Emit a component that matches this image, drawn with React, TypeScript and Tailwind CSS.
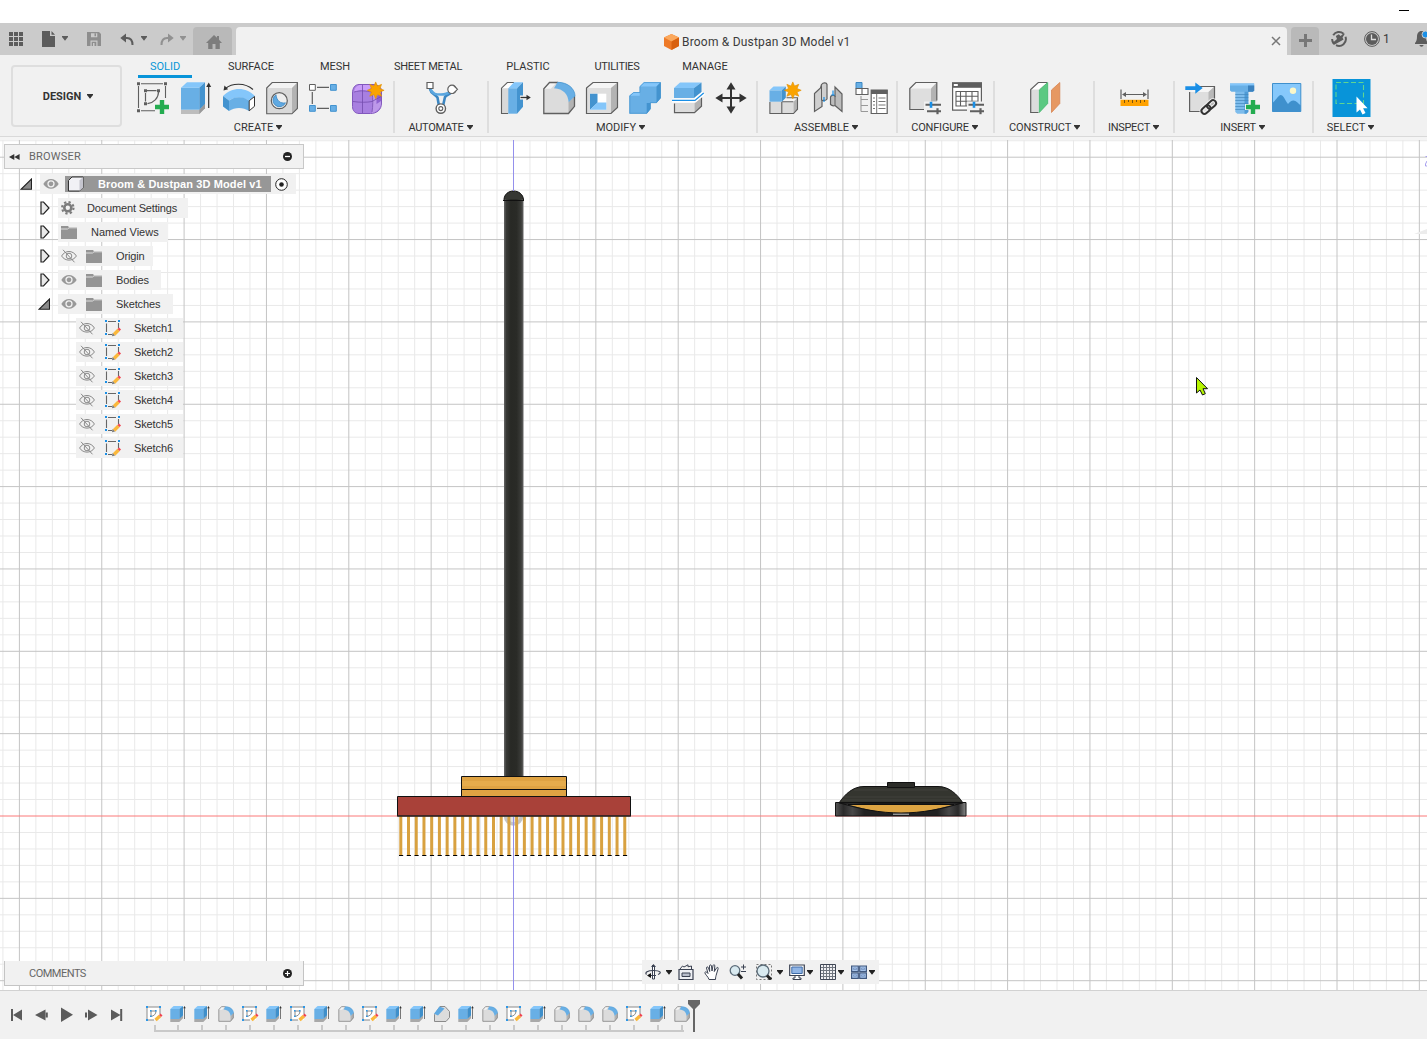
import React from "react";

const INK = "#5f5f5f";

function Caret({ className = "" }: { className?: string }) {
  return (
    <svg width="6" height="5" viewBox="0 0 6 5" className={`shrink-0 ${className}`}>
      <path d="M-.2 0h6.400v.8L3 4.800-.2.8z" fill="currentColor" />
    </svg>
  );
}

/* ---------- ribbon glyphs, each drawn in a 43 x 40 slot ---------- */

function Slot({ children }: { children: React.ReactNode }) {
  return (
    <svg width="43" height="40" viewBox="0 0 43 40" fill="none" className="shrink-0">
      {children}
    </svg>
  );
}

const Plus = ({ x, y }: { x: number; y: number }) => (
  <path d={`M${x - 7} ${y}h14M${x} ${y - 7}v14`} stroke="#24ac50" strokeWidth="4.4" />
);

function Star({ x, y }: { x: number; y: number }) {
  const pts: string[] = [];
  for (let i = 0; i < 16; i++) {
    const r = i % 2 ? 4.6 : 8.4;
    const a = (i * Math.PI) / 8;
    pts.push(`${x + r * Math.sin(a)},${y - r * Math.cos(a)}`);
  }
  return <polygon points={pts.join(" ")} fill="#faa300" stroke="#e08e00" strokeWidth=".6" />;
}

const Sliders = () => (
  <g>
    <path d="M21 23.5h18v13H21z" fill="#f1f1f1" />
    <path d="M22.5 26.8h15.5M24 33.2h14" stroke={INK} strokeWidth="2" />
    <path d="M28 23.8v6" stroke="#1a8fe6" strokeWidth="2.6" />
    <path d="M34.5 30.2v6" stroke={INK} strokeWidth="2.2" />
  </g>
);

const CreateSketch = () => (
  <Slot>
    <path d="M9 5.7h22M6.5 8v22M9 32.7h14M33.5 8v12" stroke={INK} strokeWidth="1.1" />
    <path d="M15 12.7h9.5M13.5 15v8.500M26.5 14c0 6-5 11-11 11.700" stroke={INK} strokeWidth="1.2" />
    <path d="M5 4.200h3v3H5zM32 4.200h3v3h-3zM5 31.200h3v3H5zM12 11.200h3v3h-3zM25 11.200h3v3h-3zM12 24.200h3v3h-3z" fill={INK} />
    <Plus x={30} y={29} />
  </Slot>
);
const Extrude = () => (
  <Slot>
    <path d="M6 31.7h18.3l5.7-5.4v4L24.3 36H6z" fill="#bdbdbd" />
    <path d="M24.3 31.7l5.7-6.4v5L24.3 36z" fill="#9a9a9a" />
    <path d="M6 9.7h18.3v22H6z" fill="#68afe5" />
    <path d="M6 9.7l6-5.4h18l-5.7 5.4z" fill="#84c6fa" />
    <path d="M24.3 9.7L30 4.3v21.4l-5.7 6z" fill="#4393cf" />
    <path d="M33.7 7.5V30" stroke="#333" strokeWidth="1.2" />
    <path d="M31.2 9l2.5-4.5L36.2 9z" fill="#333" />
  </Slot>
);
const Revolve = () => (
  <Slot>
    <path d="M5 18c9-9.5 23-9.5 32 0l-6 4.5c-7-4-14-4-20 0z" fill="#84c6fa" />
    <path d="M5 18l6 4.5V33L5 28.5z" fill="#4393cf" />
    <path d="M11 22.5c6-4.5 14-4.5 20 0V33c-6-4-14-4-20 0z" fill="#68afe5" />
    <path d="M31.2 22.8l5.3-4.3v9.8l-5.3 4.5z" fill="#fff" stroke="#333" />
    <path d="M7.5 10.5C14 5 27 4.5 35 11.5" stroke="#333" strokeWidth="1.1" />
    <path d="M5.5 12.5l1-5 3.6 3.7z" fill="#333" />
  </Slot>
);
const Hole = () => (
  <Slot>
    <path d="M5.7 10l5.5-5.5h25.2v26l-5.5 5.3H5.7z" fill="#d9d9d9" />
    <path d="M5.7 10l5.5-5.5h25.2L31 10z" fill="#f3f3f3" />
    <path d="M31 10l5.4-5.5v26L31 35.8z" fill="#b3b3b3" />
    <path d="M5.7 10l5.5-5.5h25.2v26l-5.5 5.3H5.7z" stroke={INK} strokeWidth="1.1" />
    <circle cx="18.3" cy="22.7" r="8" fill="#eee" stroke={INK} strokeWidth="1.2" />
    <path d="M15 16.8a6.5 6.5 0 1 0 9.5 8C19.5 26 15.5 22.5 15 16.8z" fill="#5fa9e2" stroke="#3b86c2" strokeWidth=".8" />
  </Slot>
);
const Pattern = () => (
  <Slot>
    <path d="M13 9.3h12M13 30.3h12M8.3 14v12" stroke={INK} strokeWidth="1.2" />
    <path d="M5.5 6.5h5.8v5.8H5.5z" fill="#fff" stroke={INK} />
    <path d="M26.5 6.5h5.8v5.8h-5.8zM5.5 27.5h5.8v5.8H5.5zM26.5 27.5h5.8v5.8h-5.8z" fill="#68afe5" stroke="#4393cf" />
  </Slot>
);
const Form = () => (
  <Slot>
    <path d="M12 6.5h14c5 0 8.5 3 8.5 6.500v12c0 7-5 10.500-11 10.500H12c-4 0-6.500-3-6.500-7V15c0-5 2.500-8.500 6.500-8.500z" fill="#a87fe0" stroke="#8258bd" />
    <path d="M7 14c1-5 3-7 7-7h12l-5 6c-5-1-9-1-14 1z" fill="#ca9df9" />
    <path d="M25 16c4-1 6-3 9-3v13c-1 5-5 8-9 9z" fill="#bd98e9" />
    <path d="M29.5 18l4.500-3v8l-4.500 3z" fill="#8f62cf" />
    <path d="M6 23.5c7 1 14 1 19 0l9-5M15.500 7v28M25 14c1 7 1 14 0 20M7 14c7-2 12-1 18 0" stroke="#734bad" strokeWidth=".8" />
    <Star x={28.7} y={12.3} />
  </Slot>
);
const Automate = () => (
  <Slot>
    <path d="M10 11c1 5 5 5 7.5 8.5L19 28h4l2-9c2-3 5-2 6.500-5" stroke="#3b86c2" strokeWidth="2.6" />
    <path d="M10.5 11.5c3 5 5 5 10.500 5s7-1 9-3" stroke="#5aa6df" strokeWidth="2.6" />
    <path d="M7 4.500h6v6H7z" fill="#fff" stroke={INK} strokeWidth="1.2" />
    <circle cx="32" cy="11.300" r="4.200" fill="#fff" stroke={INK} strokeWidth="1.2" />
    <path d="M33 7.200l4.500 4.100-4.500 4.400" fill="#fff" stroke={INK} strokeWidth="1.1" />
    <circle cx="20.800" cy="30.600" r="4.700" fill="#fff" stroke={INK} strokeWidth="1.4" />
    <circle cx="20.800" cy="30.600" r="2" stroke={INK} strokeWidth="1.1" />
  </Slot>
);
const PressPull = () => (
  <Slot>
    <path d="M7.5 10.2l5.8-5.7H21l-6 6v25.2H7.5z" fill="#d9d9d9" />
    <path d="M7.5 10.2l5.8-5.7H21l-6 5.7z" fill="#fff" />
    <path d="M14 35.5H7.5V10.2l5.8-5.7H20" stroke={INK} strokeWidth="1.1" />
    <path d="M14.3 10.2H23v25.500h-8.700z" fill="#68afe5" />
    <path d="M14.3 10.2L20 4.300h9l-6 5.900z" fill="#84c6fa" />
    <path d="M23 10.2l6-5.900v24.500l-6 6.900z" fill="#4393cf" />
    <path d="M26 19.5h12" stroke="#f1f1f1" strokeWidth="4" />
    <path d="M26.5 19.5h7" stroke="#333" strokeWidth="1.3" />
    <path d="M32.5 16.8l4.3 2.7-4.3 2.7z" fill="#333" />
  </Slot>
);

function FilletShape({ outline = INK }: { outline?: string }) {
  return (
    <g>
      <path d="M6.8 10.8L12.5 4.500h8c10 0 17 6 17 14v9.800l-6 7.200H6.800z" fill="#dcdcdc" />
      <path d="M31.5 24l6-6v10.300l-6 7.200z" fill="#b3b3b3" />
      <path d="M6.800 10.800L12.500 4.500h7l-5.700 6.300z" fill="#f4f4f4" />
      <path d="M21 4.500h-8.500l-5.700 6.300v24.700h24.700l6-7.200V18" stroke={outline} strokeWidth="1.3" fill="none" />
      <path d="M20.5 4.300c10 0 17.300 6 17.500 13.700l-6.300 6.300c-.7-8-5-13.300-14.700-14z" fill="#68afe5" />
      <path d="M20.5 4.300c10 0 17.300 6 17.500 13.700l-1.500 1.300" stroke="#4393cf" strokeWidth=".8" fill="none" />
    </g>
  );
}
const Fillet = () => (
  <Slot>
    <FilletShape />
  </Slot>
);
const Shell = () => (
  <Slot>
    <path d="M6.5 10l6.500-5.500h24.500v25L31 35.500H6.500z" fill="#dedede" />
    <path d="M6.5 10L13 4.500h24.500L31 10z" fill="#f5f5f5" />
    <path d="M31 10l6.500-5.500v25L31 35.500z" fill="#b3b3b3" />
    <path d="M6.5 10L13 4.500h24.500v25L31 35.500H6.500z" stroke={INK} strokeWidth="1.2" />
    <path d="M10 15.700h16.300v16H10z" fill="#fff" />
    <path d="M10 15.700h7.500v9L10 31.700z" fill="#4393cf" />
    <path d="M17.5 24.500h8.800v7.200H10z" fill="#84c6fa" />
  </Slot>
);
const Combine = () => (
  <Slot>
    <path d="M6.300 17.700l4.200-3.500h6.200V8.500l4.300-4.200h16.700V20l-4.200 5h-6v6l-3.800 4.700H6.300z" fill="#68afe5" />
    <path d="M6.300 17.700l4.200-3.500h6.200v3.500zM16.700 8.500L21 4.300h16.700l-4.200 4.200z" fill="#84c6fa" />
    <path d="M33.500 8.500l4.200-4.200V20l-4.200 5zM23.700 25h3.800v6l-3.800 4.700z" fill="#4393cf" />
    <path d="M6.800 17.900l3.900-3.400h6.200V8.700l4.200-4.100h16.300V20l-4 4.700h-6v6l-3.700 4.600H6.800z" stroke="#4393cf" strokeWidth=".7" />
  </Slot>
);
const SplitBody = () => (
  <Slot>
    <path d="M8 10h20v10H8z" fill="#68afe5" />
    <path d="M8 10l6-5.500h21.500L28 10z" fill="#84c6fa" />
    <path d="M28 10l7.500-5.500V14L28 20z" fill="#4393cf" />
    <path d="M8.500 25h20v9.700h-20z" fill="#dcdcdc" />
    <path d="M28.500 25l7-6.500v9.700l-7 6.500z" fill="#b3b3b3" />
    <path d="M8.500 25.500v9.200h20l7-6.500v-9" stroke={INK} strokeWidth="1.2" />
    <path d="M6 22.400h23l8.700-7.300" stroke="#fff" strokeWidth="4" />
    <path d="M6 22.400h23l8.700-7.300" stroke="#1a8fe6" strokeWidth="1.3" />
  </Slot>
);
const Move = () => (
  <Slot>
    <path d="M10 20h24M22 8v24" stroke="#333" strokeWidth="2" />
    <path d="M17.500 11.500L22 4.300l4.500 7.200zM17.500 28.500L22 35.700l4.500-7.200zM13.500 15.500L6.300 20l7.200 4.500zM30.500 15.500l7.200 4.500-7.200 4.500z" fill="#333" />
  </Slot>
);
const NewComponent = () => (
  <Slot>
    <path d="M6.500 23.700h24v12h-24z" fill="#dcdcdc" />
    <path d="M18.800 23.700l4.200-4h11.500l-4 4z" fill="#f5f5f5" />
    <path d="M30.500 23.700l4-4v11.500l-4 4.500z" fill="#b3b3b3" />
    <path d="M6.900 24v11.500h23.600l4-4.300V19.800h-11M18.800 24v11.500M18.800 23.700h11.500" stroke={INK} strokeWidth="1.1" />
    <path d="M6.500 12.300h12.300v11.400H6.500z" fill="#68afe5" />
    <path d="M6.500 12.300l4-3.800h12.300l-4 3.800z" fill="#84c6fa" />
    <path d="M18.800 12.300l4-3.800v11.200l-4 4z" fill="#4393cf" />
    <Star x={29.8} y={12.3} />
  </Slot>
);
const Joint = () => (
  <Slot>
    <path d="M8.500 15.500l6-5.500 1-3.500c2-2.500 5-2 5.500 0V21c-1.500 2.500-3.500 1-5 1.500v6l-7.500 5z" fill="#cfcfcf" stroke={INK} strokeWidth="1.2" />
    <path d="M15.500 7.500v15" stroke={INK} />
    <path d="M36 16l-7-7v9c-2-1.500-4-.5-4.500 1v7.500c1.500 1.500 3 1.500 4.500 1l7 6z" fill="#bdbdbd" stroke={INK} strokeWidth="1.2" />
    <path d="M29 18v9" stroke={INK} />
    <path d="M18 19v5M27 12.500v5M25.300 17h3.400" stroke="#1a8fe6" strokeWidth="1.2" />
  </Slot>
);
const BillOfMaterials = () => (
  <Slot>
    <path d="M7 4.500h6v6H7z" fill="#68afe5" stroke="#3b86c2" />
    <path d="M7 10.500h6v6H7zM13 10.500h6v6h-6z" fill="#fff" stroke={INK} strokeWidth="1.1" />
    <path d="M12 18v15.500M12 21.500h7M12 27.500h7M12 33.500h7" stroke="#999" strokeWidth="1.1" />
    <path d="M22.200 12.200h16v23.300h-16z" fill="#fff" stroke={INK} strokeWidth="1.2" />
    <path d="M22 12h16.500v4H22z" fill={INK} />
    <path d="M27.700 16v19M29.500 20h7M29.500 23.500h7M29.500 27h7M29.500 30.500h7M24 20h2M24 23.500h2M24 27h2M24 30.500h2" stroke="#777" />
  </Slot>
);
const Configure = () => (
  <Slot>
    <path d="M6.800 10.500l6-6h21v21L28 31.500H6.800z" fill="#dedede" />
    <path d="M6.800 10.500l6-6h21L28 10.500z" fill="#f5f5f5" />
    <path d="M28 10.500l5.800-6v21L28 31.500z" fill="#b3b3b3" />
    <path d="M22 31.500H6.800v-21l6-6h21v18" stroke={INK} strokeWidth="1.2" />
    <Sliders />
  </Slot>
);
const ConfigTable = () => (
  <Slot>
    <path d="M6.600 5h28.800v27.200H6.600z" fill="#fff" stroke={INK} strokeWidth="1.2" />
    <path d="M6 4.300h30v5.500H6z" fill={INK} />
    <path d="M7.800 6h4v2h-4z" fill="#fff" />
    <path d="M10 13.500h22v14.500H10zM10 18.300h22M10 23.200h22M14.500 13.500V28M20 13.500V28M26 13.500V28" stroke={INK} strokeWidth="1.1" />
    <Sliders />
  </Slot>
);
const Construct = () => (
  <Slot>
    <path d="M7.700 11.500l7.600-7h9l-8.800 8v22H7.700z" fill="#dcdcdc" />
    <path d="M7.700 11.500l7.600-7h9l-8.800 7z" fill="#fff" />
    <path d="M15.500 34.500H7.700v-23l7.600-7H24" stroke={INK} strokeWidth="1.2" />
    <path d="M16.300 12l8.400-7.500v21l-8.400 9z" fill="#5bc982" stroke="#3fb56a" strokeWidth=".8" />
    <path d="M28.500 12l8.300-7.500v21l-8.300 9z" fill="#e69862" stroke="#d88450" strokeWidth=".8" />
  </Slot>
);
const Inspect = () => (
  <Slot>
    <path d="M8 11.500v9.500M35 11.500v9.500M10 16.500h23" stroke={INK} strokeWidth="1.2" />
    <path d="M9 16.500l4-2.500v5zM34 16.500l-4-2.500v5z" fill={INK} />
    <path d="M7.500 21.800h28V28h-28z" fill="#ffa200" />
    <path d="M11.500 22v3M15.500 22v2M19.500 22v3M23.500 22v2M27.500 22v3M31.500 22v2" stroke="#7a5410" />
  </Slot>
);
const InsertLink = () => (
  <Slot>
    <path d="M9.600 14l6-5.500h19V28l-6 5.500h-19z" fill="#dedede" />
    <path d="M9.600 14l6-5.500h19l-6 5.500z" fill="#f5f5f5" />
    <path d="M28.500 14l6-5.500V28l-6 5.500z" fill="#b8b8b8" />
    <path d="M20 33.500H9.600V14M20 8.500h14.500v14" stroke={INK} strokeWidth="1.2" />
    <path d="M5.300 8.300h10V4.500l7.400 5.500-7.400 5.800V12h-10z" fill="#1a8fe6" />
    <g transform="rotate(-42 28.800 29)" stroke="#f1f1f1" strokeWidth="4">
      <rect x="20" y="26" width="10" height="6" rx="3" />
      <rect x="27.500" y="26" width="10" height="6" rx="3" />
    </g>
    <g transform="rotate(-42 28.800 29)" stroke="#333" strokeWidth="2">
      <rect x="20" y="26" width="10" height="6" rx="3" />
      <rect x="27.500" y="26" width="10" height="6" rx="3" />
    </g>
  </Slot>
);
const Fastener = () => (
  <Slot>
    <path d="M12.300 13h13v21l-2 1.700h-9l-2-1.700z" fill="#7dbcec" />
    <path d="M21.500 13h3.800v21l-2 1.700h-1.800z" fill="#4f9bd6" />
    <path d="M12.300 16.500h13M12.300 19.500h13M12.300 22.500h13M12.300 25.500h13M12.300 28.500h13M12.300 31.500h13" stroke="#4488bd" strokeWidth=".7" />
    <path d="M7 5.500h24.200v7L30 13.800H8.500L7 12.500z" fill="#68afe5" />
    <path d="M7 5.500h24v2H7z" fill="#84c6fa" />
    <path d="M25 7.500h6.200v5L30 13.800h-5z" fill="#3b82bf" />
    <path d="M22 29h16M30 21v16" stroke="#f1f1f1" strokeWidth="6" />
    <Plus x={30} y={29} />
  </Slot>
);
const InsertImage = () => (
  <Slot>
    <path d="M6.500 5.500h28.300v28H6.500z" fill="#86c8fb" />
    <path d="M6.500 25c3-2 5-7 8-8 3 0 4.500 5 7.500 9 2-2 3-3.500 5.500-3.500s5 3 7.300 5v6H6.500z" fill="#3f90cd" />
    <path d="M6.500 5.500h28.300v28H6.500z" stroke="#3f90cd" />
    <circle cx="27" cy="12.700" r="3.200" fill="#fbf7c9" />
  </Slot>
);
const Select = () => (
  <Slot>
    <path d="M2.500 1h38v38h-38z" fill="#0894d9" />
    <path d="M6 4.500h27.500v21H6z" stroke="#5fd591" strokeWidth="1.1" strokeDasharray="5 2.5" />
    <path d="M26.500 18.500v16l3.500-3 2.500 5 3-1.500-2.400-4.800h4.500z" fill="#fff" />
  </Slot>
);

/* ---------- browser, timeline and navigation glyphs ---------- */

const Eye = () => (
  <svg width="16" height="12" viewBox="0 0 16 12" fill="none" className="shrink-0">
    <path d="M.3 6C4-.8 12-.8 15.700 6 12 12.300 4 12.300.3 6z" fill="#999" />
    <circle cx="8" cy="5.800" r="3" fill="#999" stroke="#f1f1f1" strokeWidth="1.3" />
  </svg>
);
const EyeOff = () => (
  <svg width="16" height="14" viewBox="0 0 16 14" fill="none" className="shrink-0" stroke="#8a8a8a">
    <path d="M.6 7C4 1 12 1 15.400 7 12 12.500 4 12.500.6 7z" />
    <circle cx="8" cy="7" r="2.800" />
    <path d="M2 .8l11.500 12.500" />
  </svg>
);
const Folder = () => (
  <svg width="16" height="13" viewBox="0 0 16 13" className="shrink-0">
    <path d="M0 0h7l1 1.200h8V13H0z" fill="#949494" />
    <path d="M0 3h6.500L8 1.800h8" stroke="#e6e6e6" strokeWidth=".9" fill="none" />
  </svg>
);
const Gear = () => (
  <svg width="14" height="14" viewBox="0 0 14 14" fill="none" className="shrink-0">
    <circle cx="6.800" cy="6.800" r="5.700" stroke="#7b7b7b" strokeWidth="2.200" strokeDasharray="2.240 2.240" />
    <circle cx="6.800" cy="6.800" r="3.500" stroke="#7b7b7b" strokeWidth="2.600" />
  </svg>
);
const SketchGlyph = () => (
  <svg width="18" height="18" viewBox="1 0 18 18" fill="none" className="shrink-0">
    <path d="M5 2.500h8M3.500 4.500V13M15.500 4v5M5 15.500h4" stroke="#666" strokeWidth="1.1" />
    <path d="M2 1h2v2H2zM15 1h2v2h-2zM2 14h2v2H2z" fill="#1a8fe6" />
    <path d="M11 15.500l4.500-4.500" stroke="#fbb83c" strokeWidth="3.400" />
    <path d="M16 8.500l2 2-1.500 1.500-2-2z" fill="#f0424f" />
    <path d="M9.500 14l2.500 2.500-3 .7z" fill="#777" />
  </svg>
);
const Closed = () => (
  <svg width="10" height="14" viewBox="0 0 10 14" className="ml-px shrink-0">
    <path d="M1 1h2.500L9 7l-5.500 6H1z" fill="#e9e9e9" stroke="#222" strokeWidth="1.2" />
  </svg>
);
const Opened = () => (
  <svg width="12" height="12" viewBox="0 0 12 12" className="shrink-0">
    <path d="M11.500 1v10.300H1z" fill="#8b8b8b" stroke="#222" strokeWidth="1.1" />
  </svg>
);

const TimeSketch = () => (
  <svg width="18" height="18" viewBox="0 0 18 18" fill="none">
    <path d="M2 2h13v13H2z" fill="#fff" />
    <path d="M3 2h11M2 3v11M15 3v6M3 15h6M5.500 6h5M6 6v5M11 6c0 3-2 5-5 5.500" stroke="#8a8a8a" />
    <path d="M1 1h2v2H1zM14 1h2v2h-2zM1 14h2v2H1zM5 5h1.600v1.600H5zM10 5h1.600v1.600H10zM5 10.500h1.600v1.600H5z" fill="#2d97e6" />
    <path d="M10.500 15l4.500-4" stroke="#fbb83c" strokeWidth="3.400" />
    <path d="M15.500 8.500l2 2-1.500 1.500-2-2z" fill="#f0424f" />
  </svg>
);
const TimeExtrude = () => (
  <svg width="18" height="18" viewBox="0 0 18 18" fill="none">
    <path d="M1.300 14H10l4-3.500v2.800L10.300 17h-9z" fill="#a9a9a9" />
    <path d="M1.300 4h9v10h-9z" fill="#68afe5" />
    <path d="M1.300 4l3.300-3H14l-3.700 3z" fill="#84c6fa" />
    <path d="M10.300 4L14 1v9.500L10.300 14z" fill="#3f8fca" />
    <path d="M15.500 3v11" stroke="#777" />
    <path d="M14.200 3.300l1.300-2.200 1.300 2.200z" fill="#333" />
  </svg>
);
const TimeFillet = () => (
  <svg width="18" height="18" viewBox="3 1 38 38" fill="none">
    <FilletShape outline="#666" />
  </svg>
);
const TimeChamfer = () => (
  <svg width="18" height="18" viewBox="0 0 18 18" fill="none">
    <path d="M1.500 9.500v7h11.500l3.500-4V6.500L12 1.500H7z" fill="#dcdcdc" stroke="#8a8a8a" />
    <path d="M1 8.800L6.500 1.500 11.500 3.500 5 10.500z" fill="#5fa9e2" />
  </svg>
);

/* ---------- window sections ---------- */

function TitleTabs() {
  return (
    <div className="flex h-8 items-end bg-[#cbcbcb] text-[#5c5c5c]">
      <div className="flex h-full w-[193px] items-center pl-[9px]">
        <svg width="14" height="14" viewBox="0 0 14 14" fill="currentColor">
          <path d="M0 0h4v4H0zM5 0h4v4H5zM10 0h4v4h-4zM0 5h4v4H0zM5 5h4v4H5zM10 5h4v4h-4zM0 10h4v4H0zM5 10h4v4H5zM10 10h4v4h-4z" />
        </svg>
        <svg width="13" height="16" viewBox="0 0 13 16" fill="currentColor" className="ml-[19px]">
          <path d="M0 0h8v5h5v11H0zM9.500 0L13 3.700H9.500z" />
        </svg>
        <Caret className="mb-px ml-[7px]" />
        <svg width="14" height="14" viewBox="0 0 14 14" className="ml-[19px] text-[#8e8e8e]">
          <path d="M0 0h12l2 2v12H0z" fill="currentColor" />
          <path d="M4 1.200h6.300v4H4zM3.500 8.500h7V14h-7z" fill="#cbcbcb" />
          <path d="M7.500 1.200H9v3H7.500zM4.700 9.800h4.600V14H4.700z" fill="currentColor" />
          <path d="M6 11h1.500v3H6z" fill="#cbcbcb" />
        </svg>
        <svg width="14" height="13" viewBox="0 0 14 13" fill="none" className="ml-[19px]">
          <path d="M2 5h5c3.500 0 5.500 2.500 5.500 7" stroke="currentColor" strokeWidth="2" />
          <path d="M6 .5v9L.3 5z" fill="currentColor" />
        </svg>
        <Caret className="mb-px ml-[7px]" />
        <svg width="14" height="13" viewBox="0 0 14 13" fill="none" className="ml-[13px] text-[#919191]">
          <path d="M12 5H7C3.500 5 1.500 7.500 1.500 12" stroke="currentColor" strokeWidth="2" />
          <path d="M8 .5v9L13.700 5z" fill="currentColor" />
        </svg>
        <Caret className="mb-px ml-[6px] text-[#919191]" />
      </div>
      <div className="flex h-7 w-[39px] items-center justify-center rounded-t bg-[#b9b9b9] pt-[2px] pl-[3px]">
        <svg width="16" height="14" viewBox="0 0 16 14" fill="#7d7d7d">
          <path d="M8 0l3 2.800V1h2v3.800L16 8h-2.200v6H9.500V9h-3v5H2.200V8H0z" />
        </svg>
      </div>
      <div className="ml-1 flex h-7 w-[1051px] items-center rounded-t bg-[#f1f1f1] pt-px pr-[6px] pl-[428px]">
        <svg width="15" height="16" viewBox="0 0 15 16">
          <path d="M7.500 0L15 3.500v8.500l-7.500 4L0 12V3.500z" fill="#ee7a28" />
          <path d="M7.500 0L15 3.500 7.500 7.500 0 3.500z" fill="#fba85c" />
          <path d="M7.500 7.500L15 3.500v8.500l-7.500 4z" fill="#d8600f" />
        </svg>
        <span className="ml-[3px] pt-px font-['Roboto'] text-[12px] tracking-[0.2px] whitespace-nowrap text-[#3c3c3c]">Broom &amp; Dustpan 3D Model v1</span>
        <svg width="10" height="10" viewBox="0 0 10 10" className="mb-[2px] ml-auto">
          <path d="M1 1l8 8M9 1L1 9" stroke="#777" strokeWidth="1.5" />
        </svg>
      </div>
      <div className="ml-1 flex h-7 w-7 items-center justify-center rounded-t bg-[#b9b9b9] pb-[2px]">
        <svg width="13" height="13" viewBox="0 0 13 13">
          <path d="M0 6.500h13M6.500 0v13" stroke="#777" strokeWidth="3" />
        </svg>
      </div>
      <div className="flex h-full flex-1 items-center overflow-hidden pl-3">
        <svg width="16" height="16" viewBox="0 0 16 16" fill="none" className="shrink-0">
          <path d="M2.200 4.200A6.900 6.900 0 0 1 12.500 2.700M14.500 5.800A6.900 6.900 0 0 1 5 14.200M2.800 12.500A6.900 6.900 0 0 1 1.100 8" stroke="currentColor" strokeWidth="2" />
          <path d="M2.800 14L1.500 12 6 8 4.800 5l3-1.700L9.500 5 13 2.300l.7.700-2.200 3.500 1 2-2.500 1.500z" fill="currentColor" />
        </svg>
        <svg width="16" height="16" viewBox="0 0 16 16" fill="none" className="ml-[17px] shrink-0">
          <circle cx="8" cy="8" r="7.400" stroke="currentColor" />
          <circle cx="8" cy="8" r="6" fill="currentColor" />
          <path d="M7.500 3.500v5H12" stroke="#ddd" strokeWidth="1.3" />
        </svg>
        <span className="ml-[3px] w-[7px] font-['Roboto'] text-[12px] text-[#3a3a3a]">1</span>
        <svg width="14" height="16" viewBox="0 0 14 16" className="ml-[25px] shrink-0">
          <path d="M6.500 0c3 0 4.500 2.500 4.500 5.500 0 3 .5 5 2 6.500v1H0v-1c1.500-1.500 2-3.500 2-6.500C2 2.500 3.500 0 6.500 0zM4.500 14h4c0 2.200-4 2.200-4 0z" fill="currentColor" />
          <circle cx="10.500" cy="3.500" r="3.500" fill="#1a8fe6" stroke="#cbcbcb" />
        </svg>
      </div>
    </div>
  );
}

const TABS = [
  { t: "SOLID", c: "w-[54px] text-[#0696d7]", on: true },
  { t: "SURFACE", c: "w-[118px]" },
  { t: "MESH", c: "w-[50px]" },
  { t: "SHEET METAL", c: "w-[136px] tracking-[-0.28px]" },
  { t: "PLASTIC", c: "w-[64px]" },
  { t: "UTILITIES", c: "w-[114px] tracking-[-0.3px]" },
  { t: "MANAGE", c: "w-[62px]" },
];

const GROUPS: { t: string; c: string; l: string; icons: (() => React.ReactElement)[] }[] = [
  { t: "CREATE", c: "w-[272px] pl-[6px]", l: "pr-[6px]", icons: [CreateSketch, Extrude, Revolve, Hole, Pattern, Form] },
  { t: "AUTOMATE", c: "w-[94px]", l: "pr-px tracking-[-0.25px]", icons: [Automate] },
  { t: "MODIFY", c: "w-[269px]", l: "pr-[4px]", icons: [PressPull, Fillet, Shell, Combine, SplitBody, Move] },
  { t: "ASSEMBLE", c: "w-[140px]", l: "pr-[2px]", icons: [NewComponent, Joint, BillOfMaterials] },
  { t: "CONFIGURE", c: "w-[97px]", l: "pr-[2px] tracking-[-0.2px]", icons: [Configure, ConfigTable] },
  { t: "CONSTRUCT", c: "w-[100px]", l: "pl-px tracking-[-0.1px]", icons: [Construct] },
  { t: "INSPECT", c: "w-[80px]", l: "pr-px tracking-[-0.3px]", icons: [Inspect] },
  { t: "INSERT", c: "w-[139px] pl-[2px]", l: "pr-[4px] tracking-[-0.15px]", icons: [InsertLink, Fastener, InsertImage] },
  { t: "SELECT", c: "w-[76px]", l: "pr-px", icons: [Select] },
];

function Ribbon() {
  return (
    <div className="flex h-[85px] border-b-[3px] border-[#f4f4f4] bg-[#f1f1f1] font-['Roboto'] text-[11px] text-[#333]">
      <div className="w-[122px] shrink-0 border-b border-[#d9d9d9] pt-[10px] pl-[11px]">
        <div className="flex h-[62px] w-[111px] items-center justify-center gap-[6px] rounded border-2 border-[#dedede] pt-[2px] pl-[3px] font-bold tracking-[-0.02px]">
          DESIGN <Caret className="mb-[2px]" />
        </div>
      </div>
      <div className="flex-1 border-b border-[#d9d9d9]">
        <div className="flex h-[23px] pl-4">
          {TABS.map((t) => (
            <div key={t.t} className={`flex justify-center leading-6 whitespace-nowrap ${t.c} ${t.on ? "border-b-[3px] border-[#0894d9]" : ""}`}>
              {t.t}
            </div>
          ))}
        </div>
        <div className="flex">
          {GROUPS.map((g, i) => (
            <div key={g.t} className="flex">
              <div className={`${g.c} h-[58px] ${i ? "-ml-px" : ""}`}>
                <div className="flex justify-center">
                  {g.icons.map((Icon, k) => (
                    <Icon key={k} />
                  ))}
                </div>
                <div className={`flex items-center justify-center gap-[3px] pt-px leading-[18px] whitespace-nowrap ${g.l}`}>
                  {g.t}
                  <Caret className="mb-[2px]" />
                </div>
              </div>
              {i < GROUPS.length - 1 && <div className="mt-[3px] -ml-px h-[52px] w-[2px] bg-[#dedede]" />}
            </div>
          ))}
        </div>
      </div>
    </div>
  );
}

/* Model space: construction grid, axes and the two modelled objects. */
function Scene() {
  const step = 16.47;
  const cols: number[] = [];
  const rows: number[] = [];
  for (let i = -31; i < 56; i++) cols.push(i);
  for (let i = -41; i < 11; i++) rows.push(i);
  const bristles = Array.from({ length: 30 }, (_, i) => 400.8 + i * 7.723);
  return (
    <svg width="1427" height="850" viewBox="0 140 1427 850" fill="none" className="absolute inset-0">
      <defs>
        <linearGradient id="pole">
          <stop offset="0" stopColor="#666" />
          <stop offset=".12" stopColor="#383936" />
          <stop offset=".35" stopColor="#282925" />
          <stop offset=".65" stopColor="#2a2b27" />
          <stop offset=".88" stopColor="#3b3c39" />
          <stop offset="1" stopColor="#666" />
        </linearGradient>
        <linearGradient id="pan">
          <stop offset="0" stopColor="#555" />
          <stop offset=".06" stopColor="#2a2a2a" />
          <stop offset=".13" stopColor="#484848" />
          <stop offset=".22" stopColor="#222" />
          <stop offset=".78" stopColor="#222" />
          <stop offset=".87" stopColor="#484848" />
          <stop offset=".94" stopColor="#2a2a2a" />
          <stop offset="1" stopColor="#888" />
        </linearGradient>
      </defs>
      <path d="M0 140h1427v850H0z" fill="#fff" />
      <g stroke="#e9e9e9">
        {cols.filter((i) => i % 5).map((i) => <path key={i} d={`M${513.5 + i * step} 140v850`} />)}
        {rows.filter((i) => i % 5).map((i) => <path key={i} d={`M0 ${816 + i * step}h1427`} />)}
      </g>
      <g stroke="#c4c4c4">
        {cols.filter((i) => i % 5 === 0 && i).map((i) => <path key={i} d={`M${513.5 + i * step} 140v850`} />)}
        {rows.filter((i) => i % 5 === 0 && i).map((i) => <path key={i} d={`M0 ${816 + i * step}h1427`} />)}
      </g>
      <path d="M0 816h1427" stroke="#fb7878" />
      <circle cx="513.500" cy="816" r="8" stroke="#c4c4c4" strokeWidth="3.5" fill="#e2e2e2" />
      <path d="M504 200c0-12 19-12 19.500 0z" fill="#363733" />
      <path d="M504 199h19.500v578H504z" fill="url(#pole)" />
      <path d="M503 200.500h21M504 200c0-12 19-12 19.500 0" stroke="#111" />
      <g>
        {bristles.map((x) => (
          <path key={x} d={`M${x} 816v39`} stroke="#d8a140" strokeWidth="3" />
        ))}
        {bristles.map((x) => (
          <path key={x} d={`M${x - 1.8} 855.500h4.200`} stroke="#000" />
        ))}
      </g>
      <path d="M513.500 140v51M513.500 817v173" stroke="#9490ec" />
      <path d="M461.500 777h105v20h-105z" fill="#dfa343" />
      <path d="M462 781h104v5H462z" fill="#e6ac4c" />
      <path d="M461.500 776.500h105v20h-105zM461.500 789.500h105" stroke="#111" />
      <path d="M397.500 796.500h233v19.500h-233z" fill="#a94139" stroke="#111" />
      <path d="M397 816h234" stroke="#222" />
      <g>
        <path d="M835.500 802.500h130.500v13.500h-130.500z" fill="url(#pan)" stroke="#151515" />
        <path d="M839 803c6-9 14-16.500 25-16.500h74c11 0 19 7.500 25 16.500z" fill="#34352f" stroke="#111" />
        <path d="M845 797h112M842 800h118M854 790h94" stroke="#44453f" strokeWidth=".8" />
        <path d="M838 802.500h127M887.500 782.500h27v5h-27z" stroke="#111" fill="#2b2c28" />
        <path d="M848 804.500h106c-18 5-34 8.500-53 8.500s-35-3.500-53-8.500z" fill="#dda442" />
        <path d="M840 803c20 6 40 10 61 10s41-4 61-10M848 804.500h106" stroke="#111" />
        <path d="M893 814.200h16" stroke="#ddd" strokeWidth=".9" />
      </g>
      <path d="M1427 229l-13 5h13z" fill="#ececec" />
      <path d="M1425.500 156.500h1.500M1427 161l-1.500 3v2h1.500" stroke="#a9a1ef" />
      <path d="M1196.500 377.500v15.500l3.500-3 2.500 5 2.800-1.300-2.300-5h4.500z" fill="#b6f500" stroke="#111" />
    </svg>
  );
}

type Row = { t: string; indent: string; w: string; icons: (() => React.ReactElement)[]; state?: "open" | "closed"; tx: string };
const ROWS: Row[] = [
  { t: "Document Settings", indent: "pl-[39px]", w: "w-[130px] pl-[3px]", icons: [Gear], state: "closed", tx: "ml-[12px] tracking-[-0.17px]" },
  { t: "Named Views", indent: "pl-[39px]", w: "w-[110px] pl-[3px]", icons: [Folder], state: "closed", tx: "ml-[14px]" },
  { t: "Origin", indent: "pl-[39px]", w: "w-[95px] pl-[3px]", icons: [EyeOff, Folder], state: "closed", tx: "ml-[14px] tracking-[-0.15px]" },
  { t: "Bodies", indent: "pl-[39px]", w: "w-[103px] pl-[3px]", icons: [Eye, Folder], state: "closed", tx: "ml-[14px] tracking-[-0.15px]" },
  { t: "Sketches", indent: "pl-[38px]", w: "w-[115px] pl-[3px]", icons: [Eye, Folder], state: "open", tx: "ml-[14px] tracking-[-0.1px]" },
  ...[1, 2, 3, 4, 5, 6].map((n) => ({ t: `Sketch${n}`, indent: "pl-[76px]", w: "w-[107px] pl-[3px]", icons: [EyeOff, SketchGlyph], tx: "ml-[12px] tracking-[-0.12px]" })),
];

function Browser() {
  return (
    <div className="relative w-[304px] pt-1 font-['Liberation_Sans'] text-[11px] text-[#333]">
      <div className="ml-1 flex h-[25px] w-[300px] items-center border border-[#c8c8c8] bg-[#f1f1f1] pr-[11px] pl-1">
        <svg width="11" height="6" viewBox="0 0 11 6">
          <path d="M5.300 0v6L0 3zM10.600 0v6L5.300 3z" fill="#333" />
        </svg>
        <span className="ml-[9px] pt-[2px] font-['Roboto'] tracking-[0.2px] text-[#666]">BROWSER</span>
        <svg width="9" height="9" viewBox="0 0 9 9" className="ml-auto">
          <circle cx="4.500" cy="4.500" r="4.500" fill="#222" />
          <path d="M2 4.500h5" stroke="#fff" strokeWidth="1.3" />
        </svg>
      </div>
      <div className="mt-[3px] flex h-6 items-center pl-5">
        <Opened />
        <div className="ml-2 flex h-5 w-[256px] items-center bg-[#f1f1f1] pl-[3px]">
          <Eye />
          <div className="ml-[6px] flex h-4 w-[206px] items-center bg-[#979797] pl-px font-bold whitespace-nowrap text-white">
            <svg width="18" height="16" viewBox="0 0 18 16">
              <path d="M2.500 4.500L6 1h11v10.500L13.500 15h-11z" fill="#f1f1f5" stroke="#333" />
              <path d="M13.500 4.500L17 1v10.500L13.500 15z" fill="#c5c5ce" />
            </svg>
            <span className="ml-[14px] tracking-[0.11px]">Broom &amp; Dustpan 3D Model v1</span>
          </div>
          <svg width="13" height="13" viewBox="0 0 13 13" className="ml-1">
            <circle cx="6.500" cy="6.500" r="5.800" fill="#fff" stroke="#222" />
            <circle cx="6.500" cy="6.500" r="2.300" fill="#222" />
          </svg>
        </div>
      </div>
      {ROWS.map((r) => (
        <div key={r.t} className={`flex h-6 items-center ${r.indent}`}>
          {r.state === "closed" && <div className="w-[19px]"><Closed /></div>}
          {r.state === "open" && <div className="w-5"><Opened /></div>}
          <div className={`flex h-5 items-center bg-[#f1f1f1] whitespace-nowrap ${r.w}`}>
            <div className="flex items-center gap-[9px]">
              {r.icons.map((I, k) => <I key={k} />)}
            </div>
            <span className={r.tx}>{r.t}</span>
          </div>
        </div>
      ))}
    </div>
  );
}

function Comments() {
  return (
    <div className="absolute bottom-1 left-1 flex h-[25px] w-[300px] items-center border-x border-b border-[#c4c4c4] bg-[#f1f1f1] pr-[11px] pl-6 font-['Roboto'] text-[11px] text-[#666]">
      <span className="pt-[2px] tracking-[-0.5px]">COMMENTS</span>
      <svg width="9" height="9" viewBox="0 0 9 9" className="ml-auto">
        <circle cx="4.500" cy="4.500" r="4.500" fill="#222" />
        <path d="M2 4.500h5M4.500 2v5" stroke="#fff" strokeWidth="1.2" />
      </svg>
    </div>
  );
}

function NavBar() {
  const s = "#3b4252";
  return (
    <div className="absolute bottom-[6px] left-[642px] flex h-6 w-[237px] items-center bg-[#f1f1f1] pl-[3px] text-[#222]">
      <svg width="16" height="16" viewBox="0 0 16 16" fill="none">
        <path d="M7.500 1v14h2V3" stroke={s} fill="#fff" />
        <path d="M6 3l2.500-3L11 3z" fill={s} />
        <path d="M13 10.500c4-1.500 2.500-4-4.500-4-6 0-9 2-7 4M4 11.500h7" stroke={s} strokeWidth="1.2" />
        <path d="M2 11.500l4-2.500v5z" fill="#111" />
      </svg>
      <Caret className="ml-[5px]" />
      <svg width="16" height="16" viewBox="0 0 16 16" fill="none" className="ml-[6px]">
        <path d="M1 5.500h14v10H1z" fill="#eef0f4" stroke={s} strokeWidth="1.2" />
        <path d="M4 9h8v3.500H4z" fill="#b9bfcc" stroke={s} />
        <path d="M2 5l2.500-3 1.500 1L10 .8v2L13.500 2v3" stroke={s} />
      </svg>
      <svg width="16" height="16" viewBox="0 0 16 16" fill="#fff" stroke={s} className="ml-[10px]">
        <path d="M5 15.500C4.500 13 1 10.500.8 8.500c.7-1.200 2-.5 3.200 1L2.500 4c0-1.500 1.500-1.500 2 0L5.700 7.500 5.500 2c.2-1.500 1.800-1.500 2 0L8 7l1-5.500c.5-1.300 2-.8 1.800.5l-.5 5.500L12.500 4c.7-1.300 2-.6 1.600.8L12.500 10c-.5 2-1 3-1 5.500z" />
      </svg>
      <svg width="18" height="16" viewBox="0 0 18 16" fill="none" className="ml-[9px]">
        <circle cx="6" cy="6.500" r="4.800" fill="#d9eaf0" stroke="#5b6b78" strokeWidth="1.3" />
        <path d="M9 10l4 4.500" stroke="#222" strokeWidth="3" />
        <path d="M12 3h5M14.500.5v5M12 7.500h5" stroke={s} />
      </svg>
      <svg width="17" height="16" viewBox="0 0 17 16" fill="none" className="ml-[9px]">
        <path d="M.5.5h15v15H.5z" stroke="#777" strokeDasharray="2 2" />
        <circle cx="7" cy="7" r="6" fill="#d9eaf0" stroke="#5b6b78" strokeWidth="1.3" />
        <path d="M11 11.500l4 4" stroke="#222" strokeWidth="3" />
      </svg>
      <Caret className="ml-[4px]" />
      <svg width="16" height="16" viewBox="0 0 16 16" fill="none" className="ml-[6px]">
        <path d="M.7 1h14.600v10.500H.7z" fill="#fff" stroke={s} strokeWidth="1.2" />
        <path d="M2.800 3h10.400v6.500H2.800z" fill="#90b5e6" stroke="#3e6ba8" />
        <path d="M6 12v2H4v1.500h8V14h-2v-2" stroke={s} fill="#fff" />
      </svg>
      <Caret className="ml-[2px]" />
      <svg width="16" height="16" viewBox="0 0 16 16" fill="none" className="ml-[7px]">
        <path d="M.5.5h15v15H.5z" fill="#f1f1f4" />
        <path d="M3.500.5v15M6.500.5v15M9.500.5v15M12.500.5v15M.5 3.500h15M.5 6.500h15M.5 9.500h15M.5 12.500h15" stroke="#70767f" />
        <path d="M.5.5h15v15H.5z" stroke="#3f4654" />
      </svg>
      <Caret className="ml-[2px]" />
      <svg width="16" height="14" viewBox="0 0 16 14" fill="#a8c4ea" stroke="#41597f" className="ml-[7px]">
        <path d="M.6 1h6.700v5.500H.6zM8.700 1h6.700v5.500H8.700zM.6 7.800h6.700v5.500H.6zM8.700 7.800h6.700v5.500H8.700z" strokeWidth="1.2" />
        <path d="M2.500 3h3v1.500h-3zM10.500 3h3v1.500h-3zM2.500 9.800h3v1.500h-3zM10.500 9.800h3v1.500h-3z" stroke="#6d8cba" strokeWidth=".7" />
      </svg>
      <Caret className="ml-[2px]" />
    </div>
  );
}

const HISTORY = "SEEFSESEFSEECEFSEFFFSEF".split("");
const STEP_ICONS: Record<string, () => React.ReactElement> = { S: TimeSketch, E: TimeExtrude, F: TimeFillet, C: TimeChamfer };

function Timeline() {
  return (
    <div className="flex h-[49px] border-t border-[#d2d2d2] bg-[#f1f1f1]">
      <svg width="145" height="48" viewBox="0 0 145 48" fill="#5b5b5b">
        <path d="M11 18h2v12h-2zM22 18.500v11L13 24z" />
        <path d="M45.500 18.500v11L35 24zM45.800 21.500h2v5h-2z" />
        <path d="M61 16.500v14.500l12-7.200z" />
        <path d="M85 21.500h2v5h-2zM88 18.500v11L97.500 24z" />
        <path d="M111 18.500v11l9.500-5.500zM120.200 18h2v12h-2z" />
      </svg>
      <div className="pt-[14px]">
        <div className="flex">
          {HISTORY.map((h, i) => {
            const Icon = STEP_ICONS[h];
            return <div key={i} className="w-6"><Icon /></div>;
          })}
        </div>
        <div className="mt-[2px] ml-[9px] flex h-[7px] w-[530px] border-b-2 border-[#c9c9c9]">
          {HISTORY.map((_, i) => (
            <div key={i} className={`h-[6px] shrink-0 border-l-2 border-[#c9c9c9] ${i === 0 ? "w-[23px]" : "w-6"}`} />
          ))}
        </div>
      </div>
      <svg width="14" height="34" viewBox="0 0 14 34" className="mt-[9px] -ml-[9px]" fill="#666">
        <path d="M0 0h12v4L7 9v23H5V9L0 4z" />
      </svg>
    </div>
  );
}

export default function App() {
  return (
    <div className="flex h-[1039px] w-[1427px] flex-col overflow-hidden bg-white">
      <div className="flex h-[23px] shrink-0 justify-end pt-[10px] pr-[18px]">
        <div className="h-px w-[10px] bg-black" />
      </div>
      <TitleTabs />
      <Ribbon />
      <div className="relative h-[850px] shrink-0 overflow-hidden">
        <Scene />
        <Browser />
        <Comments />
        <NavBar />
      </div>
      <Timeline />
    </div>
  );
}
